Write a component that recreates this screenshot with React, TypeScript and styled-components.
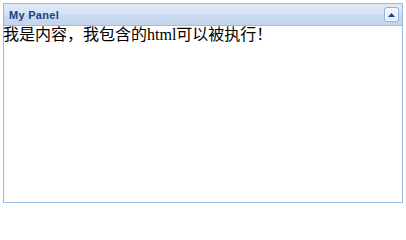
import React from "react";
import styled, { createGlobalStyle } from "styled-components";

const GlobalStyle = createGlobalStyle`
  html, body {
    margin: 0;
    padding: 0;
    background: #ffffff;
  }
  body {
    padding: 3px;
    font-family: "Liberation Serif", "Noto Sans CJK SC", serif;
  }
`;

const Panel = styled.div`
  width: 400px;
  display: flex;
  flex-direction: column;
`;

const Header = styled.div`
  box-sizing: border-box;
  height: 23px;
  border: 1px solid #99bbe8;
  padding: 0 3px 0 5px;
  display: flex;
  align-items: center;
  justify-content: space-between;
  background: linear-gradient(
    to bottom,
    #e0e9f6 0%,
    #d7e3f4 45%,
    #c9d9ef 55%,
    #c4d5ec 100%
  );
`;

const Title = styled.span`
  font-family: "Liberation Sans", "DejaVu Sans", sans-serif;
  font-weight: bold;
  font-size: 11px;
  line-height: 13px;
  letter-spacing: 0.3px;
  color: #15428b;
  padding-top: 1px;
`;

const ToolButton = styled.button`
  box-sizing: border-box;
  width: 15px;
  height: 15px;
  padding: 0;
  margin: 0;
  border: 1px solid #8eb0dc;
  border-radius: 3px;
  box-shadow: inset 0 0 0 1px #ffffff;
  background: linear-gradient(to bottom, #f4f8fd 0%, #dfe9f6 100%);
  display: flex;
  align-items: center;
  justify-content: center;
  cursor: pointer;
`;

const Body = styled.div`
  box-sizing: border-box;
  height: 177px;
  border: 1px solid #99bbe8;
  border-top: none;
  background: #ffffff;
  padding: 0;
`;

const Content = styled.div`
  font-family: "Liberation Serif", "Noto Sans CJK SC", serif;
  font-size: 16px;
  line-height: 18px;
  color: #000000;
  margin-left: -1px;
`;

export default function App() {
  return (
    <>
      <GlobalStyle />
      <Panel>
        <Header>
          <Title>My Panel</Title>
          <ToolButton aria-label="collapse">
            <svg width="7" height="4" viewBox="0 0 7 4">
              <polygon points="3.5,0 7,4 0,4" fill="#15428b" />
            </svg>
          </ToolButton>
        </Header>
        <Body>
          <Content>
            我是内容，我包含的html可以被执行！
          </Content>
        </Body>
      </Panel>
    </>
  );
}
